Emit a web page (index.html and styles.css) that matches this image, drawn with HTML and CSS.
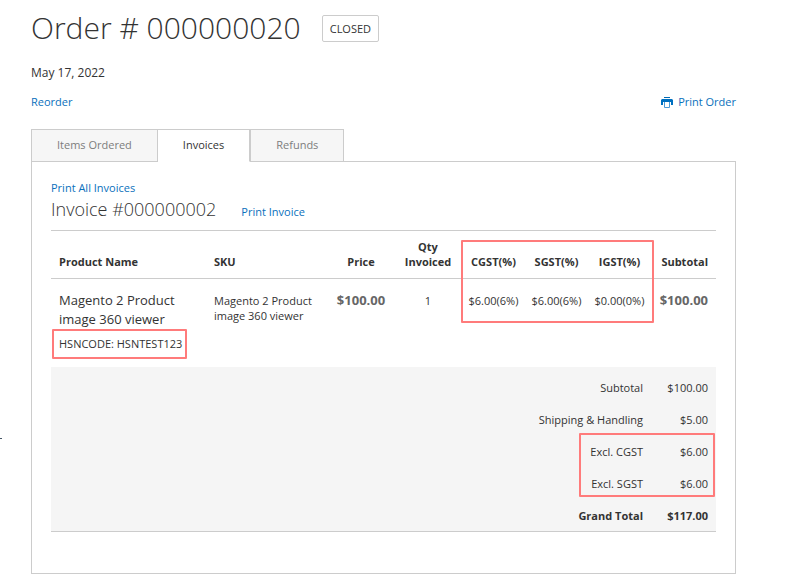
FILE: index.html
```
<!DOCTYPE html>
<html lang="en">

<head>
    <meta charset="UTF-8">
    <meta name="viewport" content="width=device-width, initial-scale=1.0">
    <title>Order # 000000020</title>
    <link rel="stylesheet" href="styles.css">
</head>

<body>

    <main class="page-main">
        <div class="page-title-wrapper">
            <h1 class="page-title">Order # 000000020</h1>
            <span class="order-status">Closed</span>
        </div>
        <div class="order-date">May 17, 2022</div>

        <div class="order-actions">
            <a href="#">Reorder</a>
            <a href="#" class="print">
                <svg width="12" height="12" viewBox="0 0 12 12" aria-hidden="true">
                    <path d="M3 1h6v1H3z" fill="#006bb4"/>
                    <path d="M1 3h10l1 1v5h-2V6H2v3H0V4z" fill="#0070c0"/>
                    <path d="M3.5 6v5.5h5V6" fill="#fff" stroke="#4a9ad8"/>
                </svg>
                Print Order
            </a>
        </div>

        <nav class="tabs">
            <a href="#" class="tab">Items Ordered</a>
            <a href="#" class="tab current">Invoices</a>
            <a href="#" class="tab">Refunds</a>
        </nav>

        <section class="order-details">
            <a href="#" class="print-all">Print All Invoices</a>
            <div class="order-title">
                <h2>Invoice #000000002</h2>
                <a href="#">Print Invoice</a>
            </div>

            <table class="table-invoice">
                <colgroup>
                    <col>
                    <col class="col-sku">
                    <col class="col-price">
                    <col class="col-qty">
                    <col class="col-tax">
                    <col class="col-tax">
                    <col class="col-tax">
                    <col class="col-subtotal">
                </colgroup>
                <thead>
                    <tr>
                        <th>Product Name</th>
                        <th>SKU</th>
                        <th class="center">Price</th>
                        <th class="center">Qty Invoiced</th>
                        <th class="tax marked">CGST(%)<span class="mark mark-tax"></span></th>
                        <th class="tax">SGST(%)</th>
                        <th class="tax">IGST(%)</th>
                        <th class="right">Subtotal</th>
                    </tr>
                </thead>
                <tbody>
                    <tr>
                        <td>
                            <strong class="product-name">Magento 2 Product image 360 viewer</strong>
                            <span class="hsn-code">HSNCODE: HSNTEST123</span>
                        </td>
                        <td>Magento 2 Product image 360 viewer</td>
                        <td class="center price">$100.00</td>
                        <td class="center">1</td>
                        <td class="tax">$6.00(6%)</td>
                        <td class="tax">$6.00(6%)</td>
                        <td class="tax">$0.00(0%)</td>
                        <td class="right price">$100.00</td>
                    </tr>
                </tbody>
                <tfoot>
                    <tr>
                        <th colspan="7">Subtotal</th>
                        <td>$100.00</td>
                    </tr>
                    <tr>
                        <th colspan="7">Shipping &amp; Handling</th>
                        <td>$5.00</td>
                    </tr>
                    <tr>
                        <th colspan="7">Excl. CGST</th>
                        <td class="marked">$6.00<span class="mark mark-totals"></span></td>
                    </tr>
                    <tr>
                        <th colspan="7">Excl. SGST</th>
                        <td>$6.00</td>
                    </tr>
                    <tr class="grand">
                        <th colspan="7">Grand Total</th>
                        <td>$117.00</td>
                    </tr>
                </tfoot>
            </table>
        </section>
    </main>

</body>

</html>
```

FILE: styles.css
```
* {
    box-sizing: border-box;
}

body {
    margin: 0;
    background: #fff;
    color: #333;
    font-family: 'Open Sans', 'Noto Sans', sans-serif;
    font-size: 11px;
    line-height: 15px;
}

/* sliver of the sidebar at the left edge */
body::before {
    content: "";
    position: absolute;
    left: 0;
    top: 438px;
    width: 2px;
    height: 1px;
    background: #456;
}

a {
    color: #0a70bc;
    text-decoration: none;
}

a:hover {
    text-decoration: underline;
}

.page-main {
    margin: 0 51px 0 31px;
    padding-top: 7px;
}

.page-title-wrapper {
    display: flex;
    align-items: center;
    gap: 21px;
}

.page-title {
    margin: 0;
    font-size: 30px;
    line-height: 42px;
    font-weight: 300;
}

.order-status {
    padding: 5px 7px;
    border: 1px solid #ccc;
    border-radius: 2px;
    text-transform: uppercase;
}

.order-date {
    margin: 16px 0 13px;
    font-size: 12px;
    line-height: 16px;
}

.order-actions {
    display: flex;
    justify-content: space-between;
    margin-bottom: 20px;
}

.print {
    display: flex;
    align-items: center;
    gap: 5px;
}

.tabs {
    display: flex;
    position: relative;
    margin-bottom: -1px;
}

.tab {
    padding: 7px 25px 9px;
    border: 1px solid #ccc;
    background: #f6f6f6;
    color: #7d7d7d;
}

.tab.current {
    border-left: 0;
    border-bottom-color: #fff;
    background: #fff;
    color: #333;
}

.order-details {
    padding: 18px 19px 41px;
    border: 1px solid #ccc;
}

.print-all {
    display: block;
}

.order-title {
    display: flex;
    align-items: baseline;
    gap: 25px;
    margin-bottom: 7px;
}

.order-title h2 {
    margin: 0;
    font-size: 18px;
    line-height: 28px;
    font-weight: 300;
}

.table-invoice {
    width: 100%;
    table-layout: fixed;
    border-collapse: collapse;
    border-top: 1px solid #ccc;
    border-bottom: 1px solid #ccc;
}

.col-sku {
    width: 122px;
}

.col-price {
    width: 66px;
}

.col-qty {
    width: 68px;
}

.col-tax {
    width: 63px;
}

.col-subtotal {
    width: 65px;
}

th,
td {
    padding: 8px;
    text-align: left;
    vertical-align: top;
}

thead th {
    padding-bottom: 9px;
    border-bottom: 1px solid #ccc;
    vertical-align: bottom;
}

tbody td {
    padding-top: 14px;
}

.center {
    text-align: center;
}

.right {
    text-align: right;
}

.tax {
    padding-left: 0;
    padding-right: 0;
    text-align: center;
}

td.price {
    padding-left: 0;
    color: #666;
    font-size: 13px;
    font-weight: 700;
}

td.price.center {
    padding-right: 0;
}

.product-name {
    display: block;
    margin-top: -2px;
    font-size: 13px;
    line-height: 19px;
    font-weight: 400;
}

/* red highlights */
.hsn-code {
    display: inline-block;
    margin-left: -7px;
    padding: 5px 3px 6px 5px;
    border: 2px solid #ff7b7b;
    border-radius: 1px;
    white-space: nowrap;
}

.marked {
    position: relative;
}

.mark {
    position: absolute;
    border: 2px solid #ff7b7b;
    border-radius: 1px;
}

.mark-tax {
    top: 9px;
    left: -1px;
    width: calc(300% + 4px);
    height: 83px;
}

.mark-totals {
    top: -3px;
    right: 1px;
    width: 136px;
    height: 64px;
}

tfoot th,
tfoot td {
    background: #f5f5f5;
    font-weight: 400;
    line-height: 16px;
    text-align: right;
}

tfoot tr:first-child > * {
    padding-top: 13px;
}

tfoot .grand > * {
    padding-bottom: 7px;
    font-weight: 700;
}
```
